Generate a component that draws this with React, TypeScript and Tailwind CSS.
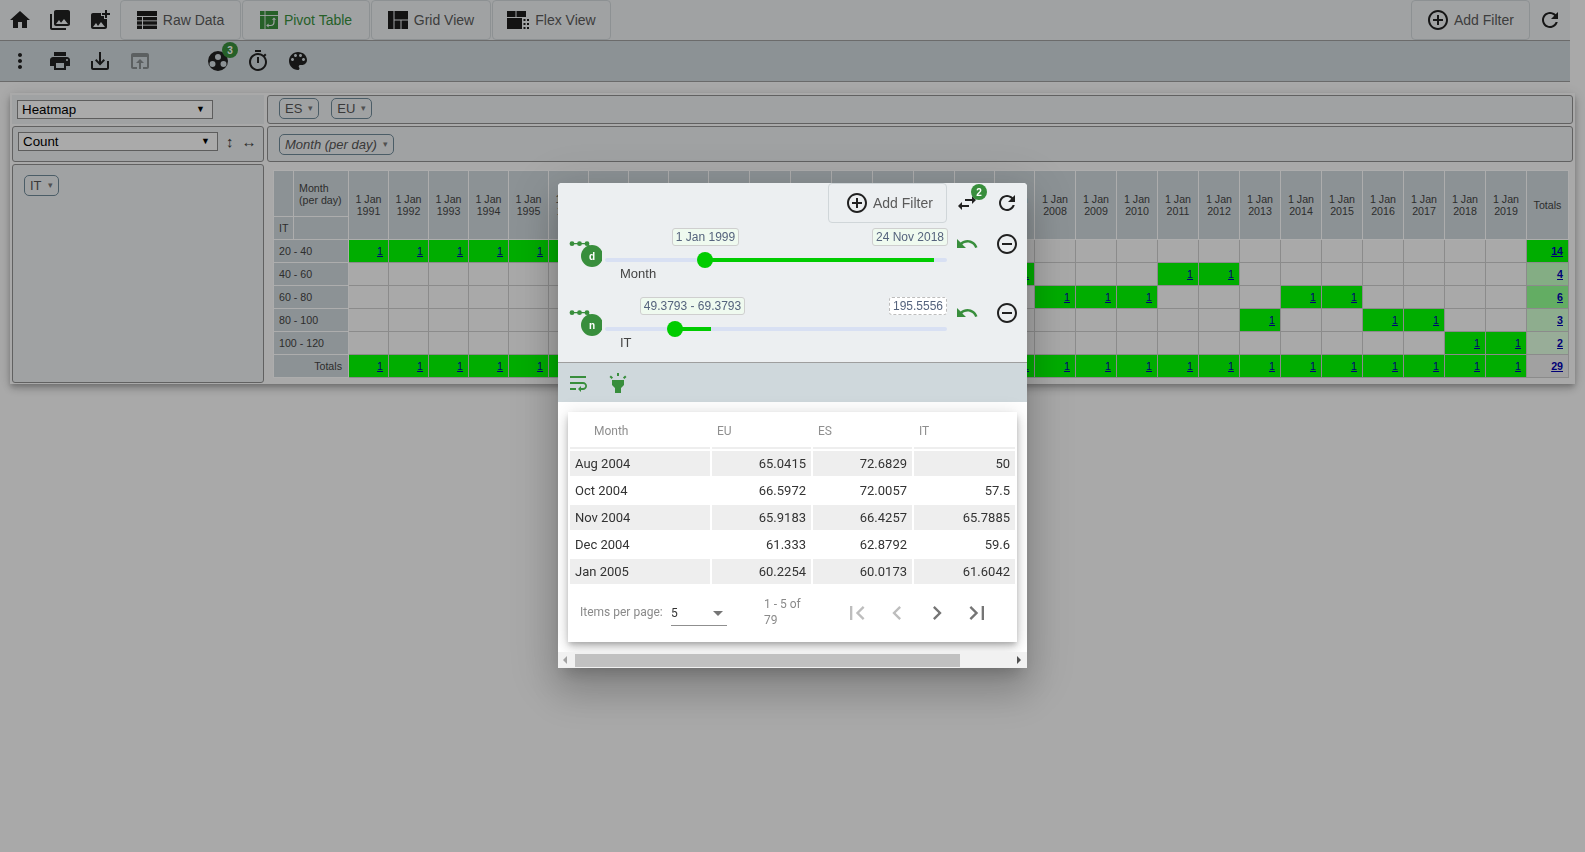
import type { ReactNode } from "react";

const ICONS = {
  home: "M10 20v-6h4v6h5v-8h3L12 3 2 12h3v8z",
  photos:
    "M22 16V4c0-1.1-.9-2-2-2H8c-1.1 0-2 .9-2 2v12c0 1.1.9 2 2 2h12c1.1 0 2-.9 2-2zm-11-4l2.03 2.71L16 11l4 5H8l3-4zM2 6v14c0 1.1.9 2 2 2h14v-2H4V6H2z",
  addPhoto:
    "M19 7v2.99s-1.99.01-2 0V7h-3s.01-1.99 0-2h3V2h2v3h3v2h-3zm-3 4V8h-3V5H5c-1.1 0-2 .9-2 2v12c0 1.1.9 2 2 2h12c1.1 0 2-.9 2-2v-8h-3zM5 19l3-4 2 3 3-4 4 5H5z",
  more: "M12 8c1.1 0 2-.9 2-2s-.9-2-2-2-2 .9-2 2 .9 2 2 2zm0 2c-1.1 0-2 .9-2 2s.9 2 2 2 2-.9 2-2-.9-2-2-2zm0 6c-1.1 0-2 .9-2 2s.9 2 2 2 2-.9 2-2-.9-2-2-2z",
  print:
    "M19 8H5c-1.66 0-3 1.34-3 3v6h4v4h12v-4h4v-6c0-1.66-1.34-3-3-3zm-3 11H8v-5h8v5zm3-7c-.55 0-1-.45-1-1s.45-1 1-1 1 .45 1 1-.45 1-1 1zm-1-9H6v4h12V3z",
  download:
    "M19 12v7H5v-7H3v7c0 1.1.9 2 2 2h14c1.1 0 2-.9 2-2v-7h-2zm-6 .67l2.59-2.58L17 11.5l-5 5-5-5 1.41-1.41L11 12.67V3h2z",
  publish:
    "M19 4H5c-1.11 0-2 .9-2 2v12c0 1.1.89 2 2 2h4v-2H5V8h14v10h-4v2h4c1.1 0 2-.9 2-2V6c0-1.1-.89-2-2-2zm-7 6l-4 4h3v6h2v-6h3l-4-4z",
  timer:
    "M15 1H9v2h6V1zm-4 13h2V8h-2v6zm8.03-6.61l1.42-1.42c-.43-.51-.9-.99-1.41-1.41l-1.42 1.42C16.07 4.74 14.12 4 12 4c-4.97 0-9 4.03-9 9s4.02 9 9 9 9-4.03 9-9c0-2.12-.74-4.07-1.97-5.61zM12 20c-3.87 0-7-3.13-7-7s3.13-7 7-7 7 3.13 7 7-3.13 7-7 7z",
  palette:
    "M12 3c-4.97 0-9 4.03-9 9s4.03 9 9 9c.83 0 1.5-.67 1.5-1.5 0-.39-.15-.74-.39-1.01-.23-.26-.38-.61-.38-.99 0-.83.67-1.5 1.5-1.5H16c2.76 0 5-2.24 5-5 0-4.42-4.03-8-9-8zm-5.5 9c-.83 0-1.5-.67-1.5-1.5S5.67 9 6.5 9 8 9.67 8 10.5 7.33 12 6.5 12zm3-4C8.67 8 8 7.33 8 6.5S8.67 5 9.5 5s1.5.67 1.5 1.5S10.33 8 9.5 8zm5 0c-.83 0-1.5-.67-1.5-1.5S13.67 5 14.5 5s1.5.67 1.5 1.5S15.33 8 14.5 8zm3 4c-.83 0-1.5-.67-1.5-1.5S16.67 9 17.5 9s1.5.67 1.5 1.5-.67 1.5-1.5 1.5z",
  refresh:
    "M17.65 6.35C16.2 4.9 14.35 4 12 4c-4.42 0-7.99 3.58-7.99 8s3.57 8 7.99 8c3.73 0 6.84-2.55 7.73-6h-2.08c-.82 2.33-3.04 4-5.65 4-3.31 0-6-2.69-6-6s2.69-6 6-6c1.66 0 3.14.69 4.22 1.78L13 11h7V4l-2.35 2.35z",
  addCircle:
    "M13 7h-2v4H7v2h4v4h2v-4h4v-2h-4V7zm-1-5C6.48 2 2 6.48 2 12s4.48 10 10 10 10-4.48 10-10S17.52 2 12 2zm0 18c-4.41 0-8-3.59-8-8s3.59-8 8-8 8 3.59 8 8-3.59 8-8 8z",
  removeCircle:
    "M7 11v2h10v-2H7zm5-9C6.48 2 2 6.48 2 12s4.48 10 10 10 10-4.48 10-10S17.52 2 12 2zm0 18c-4.41 0-8-3.59-8-8s3.59-8 8-8 8 3.59 8 8-3.59 8-8 8z",
  undo: "M12.5 8c-2.65 0-5.05.99-6.9 2.6L2 7v9h9l-3.62-3.62c1.39-1.16 3.16-1.88 5.12-1.88 3.54 0 6.55 2.31 7.6 5.5l2.37-.78C21.08 11.03 17.15 8 12.5 8z",
  swap: "M6.99 11L3 15l3.99 4v-3H14v-2H6.99v-3zM21 9l-3.99-4v3H10v2h7.01v3L21 9z",
  wrap: "M4 19h6v-2H4v2zM20 5H4v2h16V5zm-3 6H4v2h13.25c1.1 0 2 .9 2 2s-.9 2-2 2H15v-2l-3 3 3 3v-2h2c2.21 0 4-1.79 4-4s-1.79-4-4-4z",
  highlight:
    "M6 14l3 3v5h6v-5l3-3V9H6zm5-12h2v3h-2zM3.5 5.875L4.914 4.46l2.12 2.122L5.62 7.997zm13.46.71l2.123-2.12 1.414 1.414L18.375 8z",
  first: "M18.41 16.59L13.82 12l4.59-4.59L17 6l-6 6 6 6zM6 6h2v12H6z",
  prev: "M15.41 7.41L14 6l-6 6 6 6 1.41-1.41L10.83 12z",
  next: "M10 6L8.59 7.41 13.17 12l-4.58 4.59L10 18l6-6z",
  last: "M5.59 7.41L10.18 12l-4.59 4.59L7 18l6-6-6-6zM16 6h2v12h-2z",
};

const Icon = ({ name, className = "w-6 h-6" }: { name: keyof typeof ICONS; className?: string }) => (
  <svg viewBox="0 0 24 24" fill="currentColor" className={className}>
    <path d={ICONS[name]} />
  </svg>
);

const ToolIcon = ({ children, className = "" }: { children: ReactNode; className?: string }) => (
  <div className={`relative w-10 h-10 flex items-center justify-center text-[#212121] ${className}`}>{children}</div>
);

const RawIcon = () => (
  <svg viewBox="0 0 20 18" className="w-5 h-[18px]" fill="#1c1c1c">
    <rect width="20" height="5" />
    <rect y="6" width="5" height="3.4" />
    <rect x="6" y="6" width="14" height="3.4" />
    <rect y="10.3" width="5" height="3.4" />
    <rect x="6" y="10.3" width="14" height="3.4" />
    <rect y="14.6" width="5" height="3.4" />
    <rect x="6" y="14.6" width="14" height="3.4" />
  </svg>
);

const PivotIcon = () => (
  <svg viewBox="0 0 18 18" className="w-[18px] h-[18px]">
    <rect width="18" height="18" fill="#388e3c" />
    <path d="M0 4.5h18M5 0v18" stroke="#eceff1" strokeWidth="0.9" />
    <path d="M8 14.5h2.5c2 0 3.5-1.5 3.5-3.5V8.5" stroke="#eceff1" strokeWidth="1.2" fill="none" />
    <path d="M8.6 12.4v4.2l-2.4-2.1zM11.9 8.8h4.2L14 6.4z" fill="#eceff1" />
  </svg>
);

const GridIcon = () => (
  <svg viewBox="0 0 20 18" className="w-5 h-[18px]" fill="#1c1c1c">
    <rect width="5.5" height="18" />
    <rect x="6.5" width="13.5" height="8.5" />
    <rect x="6.5" y="9.5" width="6" height="8.5" />
    <rect x="13.5" y="9.5" width="6.5" height="8.5" />
  </svg>
);

const FlexIcon = () => (
  <svg viewBox="0 0 22 18" className="w-[22px] h-[18px]" fill="#1c1c1c">
    <rect width="8.5" height="6" />
    <rect x="9.5" width="9.5" height="6" />
    <rect y="7" width="15" height="11" />
    <rect x="16.5" y="8" width="2" height="2" />
    <rect x="20" y="8" width="2" height="2" />
    <rect x="16.5" y="12" width="2" height="2" />
    <rect x="20" y="12" width="2" height="2" />
    <rect x="16.5" y="16" width="2" height="2" />
    <rect x="20" y="16" width="2" height="2" />
  </svg>
);

const GroupIcon = () => (
  <svg viewBox="0 0 24 24" className="w-6 h-6" fill="currentColor" fillRule="evenodd">
    <path d="M12 2a10 10 0 1 0 0 20a10 10 0 1 0 0-20zM12 5a3 3 0 1 1 0 6a3 3 0 1 1 0-6zM6.5 12a3 3 0 1 1 0 6a3 3 0 1 1 0-6zM17.5 12a3 3 0 1 1 0 6a3 3 0 1 1 0-6z" />
  </svg>
);

const Badge = ({ value, className }: { value: number; className: string }) => (
  <span className={`absolute w-4 h-4 rounded-full bg-[#388e3c] text-white text-[10px] font-bold flex items-center justify-center ${className}`}>
    {value}
  </span>
);

const AddFilter = ({ className }: { className: string }) => (
  <div className={`h-full flex items-center border border-[#d0d6d9] rounded text-sm text-[#5a5a5a] ${className}`}>
    <Icon name="addCircle" className="w-6 h-6 text-[#212121] mr-1" />
    Add Filter
  </div>
);

const TABS = [
  { label: "Raw Data", icon: <RawIcon />, width: "w-[121px]", active: false },
  { label: "Pivot Table", icon: <PivotIcon />, width: "w-[128px]", active: true },
  { label: "Grid View", icon: <GridIcon />, width: "w-[120px]", active: false },
  { label: "Flex View", icon: <FlexIcon />, width: "w-[119px]", active: false },
];

const TopBar = () => (
  <div className="w-[1570px] h-[41px] flex bg-[#eceff1] border-b border-[#9e9e9e]">
    <ToolIcon><Icon name="home" /></ToolIcon>
    <ToolIcon><Icon name="photos" /></ToolIcon>
    <ToolIcon><Icon name="addPhoto" /></ToolIcon>
    <div className="flex gap-px">
      {TABS.map((t) => (
        <div
          key={t.label}
          className={`${t.width} h-10 flex items-center justify-center gap-[6px] border border-[#d0d6d9] rounded text-sm ${t.active ? "text-[#388e3c]" : "text-[#5a5a5a]"}`}
        >
          {t.icon}
          {t.label}
        </div>
      ))}
    </div>
    <div className="ml-auto flex">
      <AddFilter className="w-[119px] pl-[14px]" />
      <ToolIcon><Icon name="refresh" /></ToolIcon>
    </div>
  </div>
);

const SubBar = () => (
  <div className="w-[1570px] h-[41px] flex bg-[#cfd8dc] border-b border-[#9e9e9e]">
    <ToolIcon><Icon name="more" /></ToolIcon>
    <ToolIcon><Icon name="print" /></ToolIcon>
    <ToolIcon><Icon name="download" /></ToolIcon>
    <ToolIcon className="opacity-40"><Icon name="publish" /></ToolIcon>
    <ToolIcon className="ml-[38px]">
      <GroupIcon />
      <Badge value={3} className="top-[1px] left-[24px]" />
    </ToolIcon>
    <ToolIcon><Icon name="timer" /></ToolIcon>
    <ToolIcon><Icon name="palette" /></ToolIcon>
  </div>
);

const Select = ({ label, className }: { label: string; className: string }) => (
  <div className={`h-[19px] flex items-center justify-between pl-1 pr-[7px] border border-[#8a8a8a] bg-[#fbfbfb] text-[13.33px] text-black ${className}`}>
    {label}
    <span className="text-[9px]">▼</span>
  </div>
);

const Chip = ({ label, italic = false }: { label: string; italic?: boolean }) => (
  <div className={`h-[21px] flex items-center px-[5px] gap-[6px] border border-[#6f8a98] rounded-[5px] text-[13px] text-[#555] ${italic ? "italic" : ""}`}>
    {label}
    <span className="text-[9px] not-italic text-[#777]">▾</span>
  </div>
);

const YEARS = Array.from({ length: 29 }, (_, i) => 1991 + i);
const COL_WIDTHS = YEARS.map((y) =>
  y < 2000 ? "w-[40px]" : y < 2006 ? "w-[41px]" : y < 2008 ? "w-[40px]" : "w-[41px]"
);

const ROWS = [
  { label: "20 - 40", years: [1991, 1992, 1993, 1994, 1995, 1996, 1997, 1998, 1999, 2000, 2001, 2002, 2003, 2004], total: 14, heat: "bg-[#00ff00]" },
  { label: "40 - 60", years: [2005, 2007, 2011, 2012], total: 4, heat: "bg-[#c3ffc3]" },
  { label: "60 - 80", years: [2006, 2008, 2009, 2010, 2014, 2015], total: 6, heat: "bg-[#93ff93]" },
  { label: "80 - 100", years: [2013, 2016, 2017], total: 3, heat: "bg-[#d2ffd2]" },
  { label: "100 - 120", years: [2018, 2019], total: 2, heat: "bg-[#e0ffe0]" },
];

const thClass = "border border-[#fff] bg-[#cfd8dc] text-[#444] font-normal p-0";
const tdClass = "h-[23px] border border-[#cdcdcd] p-0 pr-[5px] text-right text-[#0000b0] underline";

const PivotTable = () => (
  <table className="table-fixed border-collapse w-[1295px] text-[10.67px] leading-[12px]">
    <colgroup>
      <col className="w-[20px]" />
      <col className="w-[55px]" />
      {COL_WIDTHS.map((w, i) => (
        <col key={i} className={w} />
      ))}
      <col className="w-[42px]" />
    </colgroup>
    <thead>
      <tr className="h-[46px]">
        <th className={thClass}></th>
        <th className={`${thClass} text-left pl-[5px]`}>Month (per day)</th>
        {YEARS.map((y) => (
          <th key={y} rowSpan={2} className={`${thClass} text-center`}>
            1 Jan
            <br />
            {y}
          </th>
        ))}
        <th rowSpan={2} className={`${thClass} text-center`}>Totals</th>
      </tr>
      <tr className="h-[23px]">
        <th className={`${thClass} text-left pl-[5px]`}>IT</th>
        <th className={thClass}></th>
      </tr>
    </thead>
    <tbody>
      {ROWS.map((r) => (
        <tr key={r.label}>
          <th colSpan={2} className={`${thClass} text-left pl-[5px]`}>{r.label}</th>
          {YEARS.map((y) => (
            <td key={y} className={`${tdClass} ${r.years.includes(y) ? "bg-[#00ff00]" : ""}`}>
              {r.years.includes(y) ? "1" : ""}
            </td>
          ))}
          <td className={`${tdClass} font-bold ${r.heat}`}>{r.total}</td>
        </tr>
      ))}
      <tr>
        <th colSpan={2} className={`${thClass} text-right pr-[6px]`}>Totals</th>
        {YEARS.map((y) => (
          <td key={y} className={`${tdClass} bg-[#00ff00]`}>1</td>
        ))}
        <td className={`${tdClass} font-bold bg-[#eeeeee]`}>29</td>
      </tr>
    </tbody>
  </table>
);

const boxClass = "border border-[#8f8f8f] rounded-[3px] bg-[#eceff1]";

const Panel = () => (
  <div className="ml-[10px] mt-[11px] w-[1565px] h-[291px] pl-[2px] pt-[2px] bg-[#fafafa] grid grid-cols-[252px_1306px] grid-rows-[29px_36px_219px] gap-x-[3px] gap-y-[2px] shadow-[0_3px_5px_-1px_rgba(0,0,0,0.2),0_5px_8px_0_rgba(0,0,0,0.14),0_1px_14px_0_rgba(0,0,0,0.12)]">
    <div className="bg-[#eceff1] pl-[5px] pt-[5px]">
      <Select label="Heatmap" className="w-[196px]" />
    </div>
    <div className={`${boxClass} flex gap-[12px] pl-[11px] pt-[2px]`}>
      <Chip label="ES" />
      <Chip label="EU" />
    </div>
    <div className={`${boxClass} flex items-start pl-[5px] pt-[5px]`}>
      <Select label="Count" className="w-[200px]" />
      <span className="ml-[8px] text-[15px] leading-[19px] text-[#444]">↕</span>
      <span className="ml-[8px] text-[15px] leading-[19px] text-[#444]">↔</span>
    </div>
    <div className={`${boxClass} flex pl-[11px] pt-[7px]`}>
      <Chip label="Month (per day)" italic />
    </div>
    <div className={`${boxClass} flex items-start pl-[11px] pt-[10px]`}>
      <Chip label="IT" />
    </div>
    <div className="pl-[6px] pt-[6px]">
      <PivotTable />
    </div>
  </div>
);

const FieldIcon = ({ letter }: { letter: string }) => (
  <div className="relative w-[34px] h-[36px] shrink-0">
    <svg viewBox="0 0 34 36" className="w-[34px] h-[36px]" fill="#388e3c">
      <path d="M4 2.7h15L25 9" stroke="#388e3c" strokeWidth="1.2" fill="none" />
      <circle cx="4" cy="2.7" r="2.4" />
      <circle cx="11.5" cy="2.7" r="2.4" />
      <circle cx="19" cy="2.7" r="2.4" />
      <circle cx="24" cy="15" r="11" />
    </svg>
    <span className="absolute left-[13px] top-[4px] w-[22px] h-[22px] flex items-center justify-center text-[10px] font-bold text-white">
      {letter}
    </span>
  </div>
);

const Bubble = ({ label, className }: { label: string; className: string }) => (
  <span className={`absolute top-[5px] h-[18px] flex items-center justify-center border rounded-[3px] text-xs text-[#55637d] ${className}`}>
    {label}
  </span>
);

const FilterRow = ({
  letter,
  label,
  from,
  to,
  left,
  right,
}: {
  letter: string;
  label: string;
  from: string;
  to: string;
  left: ReactNode;
  right: ReactNode;
}) => (
  <div className="relative h-[69px] pl-[10px] pt-[18px] flex">
    <FieldIcon letter={letter} />
    {left}
    {right}
    <div className="absolute left-[47px] top-[35px] w-[342px] h-[4px] rounded-sm bg-[#d8e0f3]" />
    <div className={`absolute top-[35px] h-[4px] bg-[#00cc00] ${from}`} />
    <div className={`absolute top-[29px] w-4 h-4 rounded-full bg-[#00cc00] ${to}`} />
    <span className="absolute left-[62px] top-[43px] text-[13px] leading-4 text-[#444]">{label}</span>
    <div className="absolute left-[397px] top-[9px] w-6 h-6 text-[#388e3c]"><Icon name="undo" /></div>
    <div className="absolute left-[437px] top-[9px] w-6 h-6 text-[#212121]"><Icon name="removeCircle" /></div>
  </div>
);

const TABLE_ROWS = [
  ["Aug 2004", "65.0415", "72.6829", "50"],
  ["Oct 2004", "66.5972", "72.0057", "57.5"],
  ["Nov 2004", "65.9183", "66.4257", "65.7885"],
  ["Dec 2004", "61.333", "62.8792", "59.6"],
  ["Jan 2005", "60.2254", "60.0173", "61.6042"],
];

const DataCard = () => (
  <div className="mx-[10px] mt-[10px] h-[230px] bg-white shadow-[0_3px_5px_-1px_rgba(0,0,0,0.2),0_6px_10px_0_rgba(0,0,0,0.14),0_1px_18px_0_rgba(0,0,0,0.12)]">
    <table className="table-fixed w-[449px] border-separate border-spacing-[2px] font-['Roboto',sans-serif]">
      <colgroup>
        <col className="w-[140px]" />
        <col className="w-[99px]" />
        <col className="w-[99px]" />
        <col className="w-[101px]" />
      </colgroup>
      <thead>
        <tr className="h-[35px]">
          <th className="border-b-2 border-[#eee] pl-[24px] text-left text-xs font-normal text-[#8f8f8f]">Month</th>
          <th className="border-b-2 border-[#eee] pl-[5px] text-left text-xs font-normal text-[#8f8f8f]">EU</th>
          <th className="border-b-2 border-[#eee] pl-[5px] text-left text-xs font-normal text-[#8f8f8f]">ES</th>
          <th className="border-b-2 border-[#eee] pl-[5px] text-left text-xs font-normal text-[#8f8f8f]">IT</th>
        </tr>
      </thead>
      <tbody>
        {TABLE_ROWS.map((row, i) => (
          <tr key={row[0]} className="h-[25px]">
            {row.map((c, j) => (
              <td
                key={j}
                className={`p-0 px-[5px] text-[13px] text-[#333] ${j === 0 ? "text-left" : "text-right"} ${i % 2 === 0 ? "bg-[#eeeeee]" : ""}`}
              >
                {c}
              </td>
            ))}
          </tr>
        ))}
      </tbody>
    </table>
    <div className="mt-[14px] h-6 pl-[12px] flex items-center text-xs text-[#8a8a8a] font-['Roboto',sans-serif]">
      <span className="w-[91px]">Items per page:</span>
      <div className="relative w-[56px] h-[26px] mt-[2px] flex items-center border-b border-[#8f8f8f] text-[#333]">
        5
        <span className="absolute right-[4px] top-[11px] w-0 h-0 border-x-[5px] border-x-transparent border-t-[5px] border-t-[#757575]" />
      </div>
      <span className="ml-[37px] w-[53px]">1 - 5 of 79</span>
      <div className="ml-[20px] flex">
        <div className="w-10 h-6 flex justify-center text-[#bdbdbd]"><Icon name="first" className="w-7 h-7 -mt-[1px]" /></div>
        <div className="w-10 h-6 flex justify-center text-[#bdbdbd]"><Icon name="prev" className="w-7 h-7 -mt-[1px]" /></div>
        <div className="w-10 h-6 flex justify-center text-[#757575]"><Icon name="next" className="w-7 h-7 -mt-[1px]" /></div>
        <div className="w-10 h-6 flex justify-center text-[#757575]"><Icon name="last" className="w-7 h-7 -mt-[1px]" /></div>
      </div>
    </div>
  </div>
);

const FilterDialog = () => (
  <div className="absolute left-[558px] top-[183px] w-[469px] h-[485px] rounded-t flex flex-col bg-white font-['Liberation_Sans',Arial,sans-serif] shadow-[0_11px_15px_-7px_rgba(0,0,0,0.2),0_24px_38px_3px_rgba(0,0,0,0.14),0_9px_46px_8px_rgba(0,0,0,0.12)]">
    <div className="h-[179px] rounded-t bg-[#eceff1]">
      <div className="relative h-[40px] flex">
        <AddFilter className="ml-[270px] w-[119px] pl-[16px]" />
        <div className="ml-[0px] w-[40px] h-10 flex items-center justify-center text-[#212121]">
          <Icon name="swap" />
        </div>
        <Badge value={2} className="left-[413px] top-[1px]" />
        <div className="w-[40px] h-10 flex items-center justify-center text-[#212121]">
          <Icon name="refresh" />
        </div>
      </div>
      <FilterRow
        letter="d"
        label="Month"
        from="left-[147px] w-[229px]"
        to="left-[139px]"
        left={<Bubble label="1 Jan 1999" className="left-[114px] w-[67px] bg-[#effaef] border-[#cfcfcf]" />}
        right={<Bubble label="24 Nov 2018" className="left-[314px] w-[76px] bg-[#effaef] border-[#cfcfcf]" />}
      />
      <FilterRow
        letter="n"
        label="IT"
        from="left-[117px] w-[36px]"
        to="left-[109px]"
        left={<Bubble label="49.3793 - 69.3793" className="left-[82px] w-[105px] bg-[#effaef] border-[#cfcfcf]" />}
        right={<Bubble label="195.5556" className="left-[331px] w-[58px] bg-white border-dashed border-[#bdbdbd]" />}
      />
    </div>
    <div className="h-[40px] flex items-center pl-[8px] gap-[16px] bg-[#cfd8dc] border-t border-[#9e9e9e] text-[#388e3c]">
      <Icon name="wrap" />
      <Icon name="highlight" />
    </div>
    <div className="flex-1 flex flex-col">
      <DataCard />
      <div className="mt-auto h-4 flex items-center bg-[#f1f1f1]">
        <span className="w-[17px] pl-[5px] flex">
          <span className="w-0 h-0 border-y-[4px] border-y-transparent border-r-[4px] border-r-[#a3a3a3]" />
        </span>
        <div className="w-[385px] h-[13px] bg-[#c1c1c1]" />
        <span className="ml-auto mr-[6px] w-0 h-0 border-y-[4px] border-y-transparent border-l-[4px] border-l-[#505050]" />
      </div>
    </div>
  </div>
);

export default function App() {
  return (
    <div className="relative min-h-screen overflow-hidden bg-[#fafafa] font-['Liberation_Sans',Arial,sans-serif]">
      <TopBar />
      <SubBar />
      <Panel />
      <div className="fixed inset-0 bg-black/[0.32]" />
      <FilterDialog />
    </div>
  );
}
